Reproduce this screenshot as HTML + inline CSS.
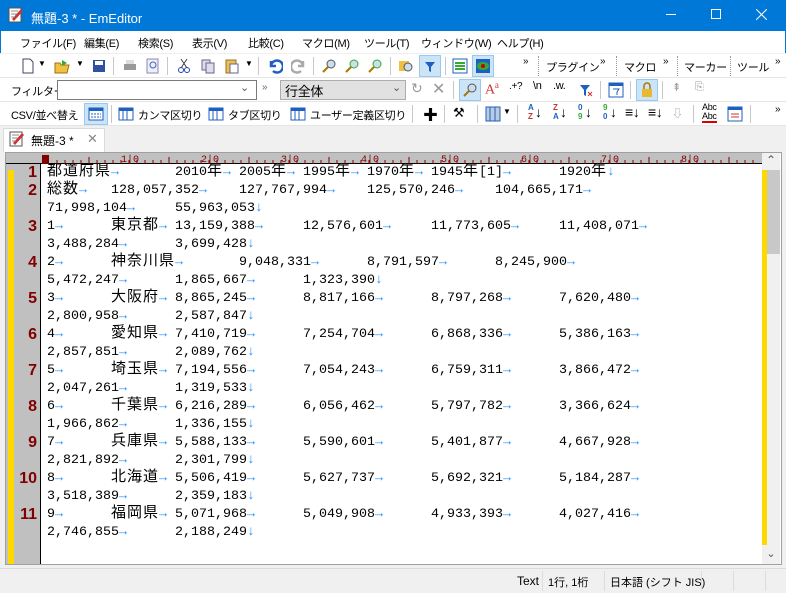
<!DOCTYPE html>
<html><head><meta charset="utf-8"><style>
*{margin:0;padding:0;box-sizing:border-box}
body{width:786px;height:593px;overflow:hidden;background:#f0f0f0;font-family:"Liberation Sans","Noto Sans CJK JP",sans-serif;font-size:12px;color:#000;position:relative}
.abs{position:absolute}
#title{left:0;top:0;width:786px;height:31px;background:#0078d7;color:#fff;font-size:13px}
#menu{left:0;top:31px;width:786px;height:22px;background:#fff;border-left:1px solid #0078d7;border-right:1px solid #0078d7}
#menu span{position:absolute;top:4px;font-size:11px;letter-spacing:-0.3px;white-space:nowrap}
.tb{left:0;width:786px;height:24px;background:#fff;border-bottom:1px solid #e5e5e5}
.ic{position:absolute;width:16px;height:16px}
.sep{position:absolute;width:1px;height:18px;background:#c8c8c8}
.t{position:absolute;font-size:11px;white-space:nowrap;letter-spacing:-0.3px}
#frame{left:5px;top:152px;width:777px;height:413px;border:1px solid #a0a0a0;background:#fff}
#ruler{left:6px;top:153px;width:756px;height:11px;background:#c0c0c0;border-bottom:1px solid #000}
#gut{left:6px;top:164px;width:35px;height:400px;background:#c0c0c0;border-right:1px solid #000}
#text{left:42px;top:164px;width:720px;height:400px;background:#fff;overflow:hidden}
.ln{position:absolute;height:18px;font-family:"Liberation Mono","Noto Sans CJK JP",monospace;font-size:13.33px;line-height:18px;white-space:pre}
.ln>span{position:absolute;top:0;height:18px;overflow:visible}
.j{font-family:"Noto Sans CJK JP",sans-serif;font-size:15px;letter-spacing:1px;line-height:18px;display:inline-block;height:18px;vertical-align:top;position:relative;top:-3px}
.a{color:#1e8fff}
.num{position:absolute;right:3px;color:#800000;font-weight:bold;font-family:"Liberation Sans",sans-serif;font-size:16px;line-height:18px}
#status{left:0;top:568px;width:786px;height:25px;background:#f0f0f0;border-top:1px solid #dcdcdc}
</style></head><body>
<div id="title" class="abs">
 <svg class="abs" style="left:8px;top:7px" width="16" height="16"><rect x="1" y="1" width="12" height="14" fill="#fff" stroke="#555"/><path d="M4 12 L13 2 L15 4 L6 14Z" fill="#c33"/><path d="M3 4h7M3 7h6M3 10h4" stroke="#888"/></svg>
 <span class="abs" style="left:31px;top:8px">無題-3 * - EmEditor</span>
 <span class="abs" style="left:666px;top:14px;width:10px;height:1px;background:#fff"></span>
 <span class="abs" style="left:711px;top:9px;width:10px;height:10px;border:1px solid #fff"></span>
 <svg class="abs" style="left:756px;top:9px" width="11" height="11"><path d="M0 0L11 11M11 0L0 11" stroke="#fff"/></svg>
</div>
<div id="menu" class="abs">
 <span style="left:19px">ファイル(F)</span><span style="left:83px">編集(E)</span><span style="left:137px">検索(S)</span><span style="left:191px">表示(V)</span><span style="left:247px">比較(C)</span><span style="left:301px">マクロ(M)</span><span style="left:363px">ツール(T)</span><span style="left:420px">ウィンドウ(W)</span><span style="left:496px">ヘルプ(H)</span>
</div>
<div class="abs tb" style="top:54px">
 <svg class="ic" style="left:20px;top:4px"><path d="M3 1h7l3 3v11H3z" fill="#fff" stroke="#446"/></svg><span class="t" style="left:38px;top:5px;font-size:8px">▼</span>
 <svg class="ic" style="left:54px;top:4px"><path d="M1 5h5l1 2h8l-2 8H1z" fill="#f0c040" stroke="#a07010"/><path d="M8 2l5 3-5 3" fill="#3a3"/></svg><span class="t" style="left:76px;top:5px;font-size:8px">▼</span>
 <svg class="ic" style="left:91px;top:4px"><rect x="2" y="2" width="12" height="12" fill="#3050a0"/><rect x="4" y="3" width="8" height="4" fill="#fff"/></svg>
 <div class="sep" style="left:113px;top:3px"></div>
 <svg class="ic" style="left:122px;top:4px"><rect x="2" y="6" width="12" height="6" fill="#999"/><rect x="4" y="2" width="8" height="4" fill="#ddd"/></svg>
 <svg class="ic" style="left:145px;top:4px"><rect x="2" y="1" width="11" height="14" fill="#eef" stroke="#88a"/><circle cx="8" cy="7" r="3" fill="none" stroke="#46a"/></svg>
 <div class="sep" style="left:167px;top:3px"></div>
 <svg class="ic" style="left:176px;top:4px"><path d="M5 1l6 9M11 1L5 10" stroke="#444"/><circle cx="5" cy="12" r="2.5" fill="none" stroke="#24a"/><circle cx="11" cy="12" r="2.5" fill="none" stroke="#24a"/></svg>
 <svg class="ic" style="left:200px;top:4px"><rect x="2" y="2" width="8" height="10" fill="#dde" stroke="#668"/><rect x="6" y="5" width="8" height="10" fill="#dde" stroke="#668"/></svg>
 <svg class="ic" style="left:224px;top:4px"><rect x="2" y="2" width="10" height="13" fill="#e8c060" stroke="#a07010"/><rect x="6" y="6" width="8" height="9" fill="#fff" stroke="#668"/></svg><span class="t" style="left:245px;top:5px;font-size:8px">▼</span>
 <div class="sep" style="left:258px;top:3px"></div>
 <svg class="ic" style="left:267px;top:4px"><path d="M4 3v5h5M4 8a6 6 0 1 1 2 5" fill="none" stroke="#1f5fbf" stroke-width="2.5"/></svg>
 <svg class="ic" style="left:291px;top:4px"><path d="M12 3v5H7M12 8a6 6 0 1 0-2 5" fill="none" stroke="#aaa" stroke-width="2.5"/></svg>
 <div class="sep" style="left:313px;top:3px"></div>
 <svg class="ic" style="left:322px;top:4px"><circle cx="9" cy="6" r="4" fill="#cde" stroke="#555"/><path d="M6 9l-5 5" stroke="#a70" stroke-width="2"/></svg>
 <svg class="ic" style="left:345px;top:4px"><circle cx="9" cy="6" r="4" fill="#cde" stroke="#3a3"/><path d="M6 9l-5 5" stroke="#a70" stroke-width="2"/></svg>
 <svg class="ic" style="left:368px;top:4px"><circle cx="9" cy="6" r="4" fill="#cde" stroke="#3a3"/><path d="M6 9l-5 5" stroke="#a70" stroke-width="2"/></svg>
 <div class="sep" style="left:390px;top:3px"></div>
 <svg class="ic" style="left:398px;top:4px"><rect x="1" y="3" width="10" height="10" fill="#f0c040"/><circle cx="10" cy="9" r="4" fill="#cde" stroke="#555"/></svg>
 <div class="abs" style="left:419px;top:1px;width:22px;height:22px;background:#cce4f7;border:1px solid #99c9ef"></div>
 <svg class="ic" style="left:422px;top:4px"><path d="M3 4h10l-4 5v5l-2-1v-4z" fill="#1f5fbf"/></svg>
 <div class="sep" style="left:445px;top:3px"></div>
 <svg class="ic" style="left:452px;top:4px"><rect x="1" y="1" width="14" height="14" fill="#fff" stroke="#1f5fbf"/><path d="M3 5h10M3 8h10M3 11h10" stroke="#3a3" stroke-width="2"/></svg>
 <div class="abs" style="left:472px;top:1px;width:22px;height:22px;background:#cce4f7;border:1px solid #99c9ef"></div>
 <svg class="ic" style="left:475px;top:4px"><rect x="1" y="1" width="14" height="14" fill="#1f5fbf"/><ellipse cx="8" cy="8" rx="6" ry="4" fill="#3a3"/><circle cx="8" cy="8" r="2" fill="#c00"/></svg>
 <span class="t" style="left:523px;top:2px;font-size:10px">»</span>
 <div class="abs" style="left:538px;top:2px;width:1px;height:20px;border-left:1px dotted #999"></div>
 <span class="t" style="left:546px;top:5px">プラグイン</span><span class="t" style="left:600px;top:2px;font-size:10px">»</span>
 <div class="abs" style="left:616px;top:2px;width:1px;height:20px;border-left:1px dotted #999"></div>
 <span class="t" style="left:624px;top:5px">マクロ</span><span class="t" style="left:663px;top:2px;font-size:10px">»</span>
 <div class="abs" style="left:677px;top:2px;width:1px;height:20px;border-left:1px dotted #999"></div>
 <span class="t" style="left:684px;top:5px">マーカー</span>
 <div class="abs" style="left:730px;top:2px;width:1px;height:20px;border-left:1px dotted #999"></div>
 <span class="t" style="left:737px;top:5px">ツール</span><span class="t" style="left:775px;top:2px;font-size:10px">»</span>
</div>
<div class="abs tb" style="top:78px">
 <span class="t" style="left:11px;top:5px">フィルター</span>
 <div class="abs" style="left:57px;top:2px;width:200px;height:20px;border:1px solid #7a7a7a;background:#fff"></div>
 <span class="t" style="left:240px;top:3px;font-size:11px;color:#555">⌄</span>
 <span class="t" style="left:262px;top:4px;font-size:10px;color:#666">»</span>
 <div class="abs" style="left:280px;top:2px;width:126px;height:20px;border:1px solid #adadad;background:#e1e1e1"></div>
 <span class="t" style="left:285px;top:3px;font-size:13px">行全体</span>
 <span class="t" style="left:392px;top:3px;font-size:11px;color:#555">⌄</span>
 <span class="t" style="left:411px;top:2px;font-size:14px;color:#999">↻</span>
 <span class="t" style="left:432px;top:1px;font-size:16px;color:#999">✕</span>
 <div class="sep" style="left:453px;top:3px"></div>
 <div class="abs" style="left:459px;top:1px;width:22px;height:22px;background:#cce4f7;border:1px solid #99c9ef"></div>
 <svg class="ic" style="left:462px;top:4px"><circle cx="10" cy="6" r="4" fill="#cde" stroke="#555"/><path d="M7 9l-5 5" stroke="#a70" stroke-width="2"/></svg>
 <span class="t" style="left:485px;top:2px;font-size:14px;color:#c33;font-family:'Liberation Serif'">A<sup style="font-size:9px">a</sup></span>
 <span class="t" style="left:509px;top:3px;font-size:10px">.+?</span>
 <span class="t" style="left:533px;top:2px;font-size:11px">\n</span>
 <span class="t" style="left:553px;top:2px;font-size:11px">.w.</span>
 <svg class="ic" style="left:578px;top:4px"><path d="M2 3h10l-4 5v6l-2-1V8z" fill="#1f5fbf"/><path d="M10 10l4 4M14 10l-4 4" stroke="#c33"/></svg>
 <div class="sep" style="left:600px;top:3px"></div>
 <svg class="ic" style="left:608px;top:4px"><rect x="1" y="1" width="14" height="14" fill="#fff" stroke="#1f5fbf"/><rect x="1" y="1" width="14" height="3" fill="#1f5fbf"/><path d="M5 7h6l-2 3v3" stroke="#1f5fbf" fill="none"/></svg>
 <div class="sep" style="left:630px;top:3px"></div>
 <div class="abs" style="left:636px;top:1px;width:22px;height:22px;background:#cce4f7;border:1px solid #99c9ef"></div>
 <svg class="ic" style="left:639px;top:4px"><path d="M5 7V4a3 3 0 0 1 6 0v3" fill="none" stroke="#a70" stroke-width="1.5"/><rect x="3" y="7" width="10" height="8" fill="#e8b830"/></svg>
 <div class="sep" style="left:662px;top:3px"></div>
 <span class="t" style="left:672px;top:3px;color:#999">⇞</span>
 <span class="t" style="left:695px;top:3px;color:#999">⎘</span>
</div>
<div class="abs tb" style="top:102px">
 <span class="t" style="left:11px;top:5px">CSV/並べ替え</span>
 <div class="abs" style="left:84px;top:1px;width:24px;height:22px;background:#cce4f7;border:1px solid #99c9ef"></div>
 <svg class="ic" style="left:88px;top:4px"><rect x="1" y="2" width="14" height="12" fill="#fff" stroke="#1f5fbf"/><rect x="1" y="2" width="14" height="3" fill="#1f5fbf"/><path d="M3 8h10M3 11h10" stroke="#1f5fbf" stroke-dasharray="2 1"/></svg>
 <div class="sep" style="left:111px;top:3px"></div>
 <svg class="ic" style="left:118px;top:4px"><rect x="1" y="2" width="14" height="12" fill="#fff" stroke="#1f5fbf"/><rect x="1" y="2" width="14" height="3" fill="#1f5fbf"/><path d="M5 5v9M9 5v9" stroke="#1f5fbf"/></svg>
 <span class="t" style="left:138px;top:5px">カンマ区切り</span>
 <svg class="ic" style="left:208px;top:4px"><rect x="1" y="2" width="14" height="12" fill="#fff" stroke="#1f5fbf"/><rect x="1" y="2" width="14" height="3" fill="#1f5fbf"/><path d="M5 5v9M9 5v9" stroke="#1f5fbf"/></svg>
 <span class="t" style="left:228px;top:5px">タブ区切り</span>
 <svg class="ic" style="left:290px;top:4px"><rect x="1" y="2" width="14" height="12" fill="#fff" stroke="#1f5fbf"/><rect x="1" y="2" width="14" height="3" fill="#1f5fbf"/><path d="M5 5v9M9 5v9" stroke="#1f5fbf"/></svg>
 <span class="t" style="left:310px;top:5px">ユーザー定義区切り</span>
 <div class="sep" style="left:412px;top:3px"></div>
 <span class="t" style="left:423px;top:2px;font-size:15px;font-weight:bold">✚</span>
 <div class="sep" style="left:444px;top:3px"></div>
 <span class="t" style="left:453px;top:3px;font-size:13px">⚒</span>
 <div class="sep" style="left:477px;top:3px"></div>
 <svg class="ic" style="left:485px;top:4px"><rect x="1" y="1" width="14" height="14" fill="#bcd" stroke="#1f5fbf"/><path d="M5 1v14M10 1v14" stroke="#1f5fbf"/></svg><span class="t" style="left:503px;top:5px;font-size:8px">▼</span>
 <div class="sep" style="left:517px;top:3px"></div>
 <span class="t" style="left:528px;top:1px;font-size:8px;line-height:9px;color:#1f5fbf;font-weight:bold">A<br><span style="color:#c33">Z</span></span><span class="t" style="left:535px;top:2px;font-size:14px">↓</span>
 <span class="t" style="left:553px;top:1px;font-size:8px;line-height:9px;color:#c33;font-weight:bold">Z<br><span style="color:#1f5fbf">A</span></span><span class="t" style="left:560px;top:2px;font-size:14px">↓</span>
 <span class="t" style="left:578px;top:1px;font-size:8px;line-height:9px;color:#1f5fbf;font-weight:bold">0<br><span style="color:#3a3">9</span></span><span class="t" style="left:585px;top:2px;font-size:14px">↓</span>
 <span class="t" style="left:603px;top:1px;font-size:8px;line-height:9px;color:#3a3;font-weight:bold">9<br><span style="color:#1f5fbf">0</span></span><span class="t" style="left:610px;top:2px;font-size:14px">↓</span>
 <span class="t" style="left:625px;top:2px;font-size:14px">≡↓</span>
 <span class="t" style="left:648px;top:2px;font-size:14px">≡↓</span>
 <span class="t" style="left:672px;top:3px;color:#999">⇩</span>
 <div class="sep" style="left:693px;top:3px"></div>
 <span class="t" style="left:702px;top:1px;font-size:9px;line-height:9px">Abc<br><span style="border-bottom:2px solid #d00">Abc</span></span>
 <svg class="ic" style="left:727px;top:4px"><rect x="1" y="1" width="14" height="14" fill="#fff" stroke="#1f5fbf"/><rect x="1" y="1" width="14" height="3" fill="#1f5fbf"/><path d="M4 8h8M4 11h8" stroke="#c33"/></svg>
 <div class="sep" style="left:750px;top:3px"></div>
 <span class="t" style="left:775px;top:2px;font-size:10px">»</span>
</div>
<div class="abs" style="left:0;top:127px;width:786px;height:25px;background:#f0f0f0"></div>
<div class="abs" style="left:3px;top:128px;width:102px;height:24px;background:#fff;border:1px solid #dadada;border-bottom:none"></div>
<svg class="abs" style="left:9px;top:131px" width="16" height="16"><rect x="1" y="1" width="12" height="14" fill="#fff" stroke="#555"/><path d="M4 12 L13 2 L15 4 L6 14Z" fill="#c33"/><path d="M3 4h7M3 7h6M3 10h4" stroke="#888"/></svg>
<span class="abs" style="left:31px;top:132px;font-size:12px">無題-3 *</span>
<span class="abs" style="left:87px;top:131px;font-size:13px;color:#888">✕</span>
<div id="frame" class="abs"></div>
<div id="ruler" class="abs">
 <svg width="756" height="11" class="abs" style="left:0;top:0">
  <rect x="36" y="2" width="7" height="9" fill="#800000"/>
  <g stroke="#800000" stroke-width="1">
   <path d="M51 7v4M59 7v4M67 7v4M75 7v4M91 7v4M99 7v4M107 7v4M115 7v4M123 7v4M131 7v4M139 7v4M147 7v4M155 7v4M171 7v4M179 7v4M187 7v4M195 7v4M203 7v4M211 7v4M219 7v4M227 7v4M235 7v4M251 7v4M259 7v4M267 7v4M275 7v4M283 7v4M291 7v4M299 7v4M307 7v4M315 7v4M331 7v4M339 7v4M347 7v4M355 7v4M363 7v4M371 7v4M379 7v4M387 7v4M395 7v4M411 7v4M419 7v4M427 7v4M435 7v4M443 7v4M451 7v4M459 7v4M467 7v4M475 7v4M491 7v4M499 7v4M507 7v4M515 7v4M523 7v4M531 7v4M539 7v4M547 7v4M555 7v4M571 7v4M579 7v4M587 7v4M595 7v4M603 7v4M611 7v4M619 7v4M627 7v4M635 7v4M651 7v4M659 7v4M667 7v4M675 7v4M683 7v4M691 7v4M699 7v4M707 7v4M715 7v4M723 7v4M731 7v4M739 7v4M747 7v4"/>
   <path d="M83 4v7M163 4v7M243 4v7M323 4v7M403 4v7M483 4v7M563 4v7M643 4v7M723 4v7" />
  </g>
  <g fill="#800000" font-family="Liberation Mono" font-size="10"><text x="115" y="9">1|0</text><text x="195" y="9">2|0</text><text x="275" y="9">3|0</text><text x="355" y="9">4|0</text><text x="435" y="9">5|0</text><text x="515" y="9">6|0</text><text x="595" y="9">7|0</text><text x="675" y="9">8|0</text></g>
 </svg>
</div>
<div class="abs" style="left:762px;top:153px;width:18px;height:17px;background:#f0f0f0;text-align:center;font-size:12px;color:#555">⌃</div>
<div class="abs" style="left:762px;top:170px;width:18px;height:377px;background:#f0f0f0"></div>
<div class="abs" style="left:767px;top:170px;width:13px;height:84px;background:#c8c8c8"></div>
<div class="abs" style="left:762px;top:170px;width:5px;height:375px;background:#ffd800"></div>
<div class="abs" style="left:762px;top:547px;width:18px;height:17px;background:#f0f0f0;text-align:center;font-size:11px;color:#555">⌄</div>
<div id="gut" class="abs">
 <div class="abs" style="left:2px;top:6px;width:6px;height:394px;background:#ffd800"></div>
 <div class="num" style="top:0">1</div><div class="num" style="top:18px">2</div><div class="num" style="top:54px">3</div><div class="num" style="top:90px">4</div><div class="num" style="top:126px">5</div><div class="num" style="top:162px">6</div><div class="num" style="top:198px">7</div><div class="num" style="top:234px">8</div><div class="num" style="top:270px">9</div><div class="num" style="top:306px">10</div><div class="num" style="top:342px">11</div>
</div>
<div id="text" class="abs">
<div class="ln" style="top:0"><span style="left:5px"><span class="j">都道府県</span><span class="a">→</span></span><span style="left:133px">2010<span class="j">年</span><span class="a">→</span></span><span style="left:197px">2005<span class="j">年</span><span class="a">→</span></span><span style="left:261px">1995<span class="j">年</span><span class="a">→</span></span><span style="left:325px">1970<span class="j">年</span><span class="a">→</span></span><span style="left:389px">1945<span class="j">年</span>[1]<span class="a">→</span></span><span style="left:517px">1920<span class="j">年</span><span class="a">↓</span></span></div>
<div class="ln" style="top:18px"><span style="left:5px"><span class="j">総数</span><span class="a">→</span></span><span style="left:69px">128,057,352<span class="a">→</span></span><span style="left:197px">127,767,994<span class="a">→</span></span><span style="left:325px">125,570,246<span class="a">→</span></span><span style="left:453px">104,665,171<span class="a">→</span></span></div>
<div class="ln" style="top:36px"><span style="left:5px">71,998,104<span class="a">→</span></span><span style="left:133px">55,963,053<span class="a">↓</span></span></div>
<div class="ln" style="top:54px"><span style="left:5px">1<span class="a">→</span></span><span style="left:69px"><span class="j">東京都</span><span class="a">→</span></span><span style="left:133px">13,159,388<span class="a">→</span></span><span style="left:261px">12,576,601<span class="a">→</span></span><span style="left:389px">11,773,605<span class="a">→</span></span><span style="left:517px">11,408,071<span class="a">→</span></span></div>
<div class="ln" style="top:72px"><span style="left:5px">3,488,284<span class="a">→</span></span><span style="left:133px">3,699,428<span class="a">↓</span></span></div>
<div class="ln" style="top:90px"><span style="left:5px">2<span class="a">→</span></span><span style="left:69px"><span class="j">神奈川県</span><span class="a">→</span></span><span style="left:197px">9,048,331<span class="a">→</span></span><span style="left:325px">8,791,597<span class="a">→</span></span><span style="left:453px">8,245,900<span class="a">→</span></span></div>
<div class="ln" style="top:108px"><span style="left:5px">5,472,247<span class="a">→</span></span><span style="left:133px">1,865,667<span class="a">→</span></span><span style="left:261px">1,323,390<span class="a">↓</span></span></div>
<div class="ln" style="top:126px"><span style="left:5px">3<span class="a">→</span></span><span style="left:69px"><span class="j">大阪府</span><span class="a">→</span></span><span style="left:133px">8,865,245<span class="a">→</span></span><span style="left:261px">8,817,166<span class="a">→</span></span><span style="left:389px">8,797,268<span class="a">→</span></span><span style="left:517px">7,620,480<span class="a">→</span></span></div>
<div class="ln" style="top:144px"><span style="left:5px">2,800,958<span class="a">→</span></span><span style="left:133px">2,587,847<span class="a">↓</span></span></div>
<div class="ln" style="top:162px"><span style="left:5px">4<span class="a">→</span></span><span style="left:69px"><span class="j">愛知県</span><span class="a">→</span></span><span style="left:133px">7,410,719<span class="a">→</span></span><span style="left:261px">7,254,704<span class="a">→</span></span><span style="left:389px">6,868,336<span class="a">→</span></span><span style="left:517px">5,386,163<span class="a">→</span></span></div>
<div class="ln" style="top:180px"><span style="left:5px">2,857,851<span class="a">→</span></span><span style="left:133px">2,089,762<span class="a">↓</span></span></div>
<div class="ln" style="top:198px"><span style="left:5px">5<span class="a">→</span></span><span style="left:69px"><span class="j">埼玉県</span><span class="a">→</span></span><span style="left:133px">7,194,556<span class="a">→</span></span><span style="left:261px">7,054,243<span class="a">→</span></span><span style="left:389px">6,759,311<span class="a">→</span></span><span style="left:517px">3,866,472<span class="a">→</span></span></div>
<div class="ln" style="top:216px"><span style="left:5px">2,047,261<span class="a">→</span></span><span style="left:133px">1,319,533<span class="a">↓</span></span></div>
<div class="ln" style="top:234px"><span style="left:5px">6<span class="a">→</span></span><span style="left:69px"><span class="j">千葉県</span><span class="a">→</span></span><span style="left:133px">6,216,289<span class="a">→</span></span><span style="left:261px">6,056,462<span class="a">→</span></span><span style="left:389px">5,797,782<span class="a">→</span></span><span style="left:517px">3,366,624<span class="a">→</span></span></div>
<div class="ln" style="top:252px"><span style="left:5px">1,966,862<span class="a">→</span></span><span style="left:133px">1,336,155<span class="a">↓</span></span></div>
<div class="ln" style="top:270px"><span style="left:5px">7<span class="a">→</span></span><span style="left:69px"><span class="j">兵庫県</span><span class="a">→</span></span><span style="left:133px">5,588,133<span class="a">→</span></span><span style="left:261px">5,590,601<span class="a">→</span></span><span style="left:389px">5,401,877<span class="a">→</span></span><span style="left:517px">4,667,928<span class="a">→</span></span></div>
<div class="ln" style="top:288px"><span style="left:5px">2,821,892<span class="a">→</span></span><span style="left:133px">2,301,799<span class="a">↓</span></span></div>
<div class="ln" style="top:306px"><span style="left:5px">8<span class="a">→</span></span><span style="left:69px"><span class="j">北海道</span><span class="a">→</span></span><span style="left:133px">5,506,419<span class="a">→</span></span><span style="left:261px">5,627,737<span class="a">→</span></span><span style="left:389px">5,692,321<span class="a">→</span></span><span style="left:517px">5,184,287<span class="a">→</span></span></div>
<div class="ln" style="top:324px"><span style="left:5px">3,518,389<span class="a">→</span></span><span style="left:133px">2,359,183<span class="a">↓</span></span></div>
<div class="ln" style="top:342px"><span style="left:5px">9<span class="a">→</span></span><span style="left:69px"><span class="j">福岡県</span><span class="a">→</span></span><span style="left:133px">5,071,968<span class="a">→</span></span><span style="left:261px">5,049,908<span class="a">→</span></span><span style="left:389px">4,933,393<span class="a">→</span></span><span style="left:517px">4,027,416<span class="a">→</span></span></div>
<div class="ln" style="top:360px"><span style="left:5px">2,746,855<span class="a">→</span></span><span style="left:133px">2,188,249<span class="a">↓</span></span></div>
</div>
<div id="status" class="abs">
 <span class="abs" style="left:517px;top:5px">Text</span>
 <div class="abs" style="left:542px;top:2px;width:1px;height:20px;background:#dcdcdc"></div>
 <span class="abs" style="left:548px;top:5px;font-size:11px">1行, 1桁</span>
 <div class="abs" style="left:604px;top:2px;width:1px;height:20px;background:#dcdcdc"></div>
 <span class="abs" style="left:610px;top:5px;font-size:11px">日本語 (シフト JIS)</span>
 <div class="abs" style="left:701px;top:2px;width:1px;height:20px;background:#dcdcdc"></div>
 <div class="abs" style="left:733px;top:2px;width:1px;height:20px;background:#dcdcdc"></div>
 <div class="abs" style="left:765px;top:2px;width:1px;height:20px;background:#dcdcdc"></div>
</div>
</body></html>
